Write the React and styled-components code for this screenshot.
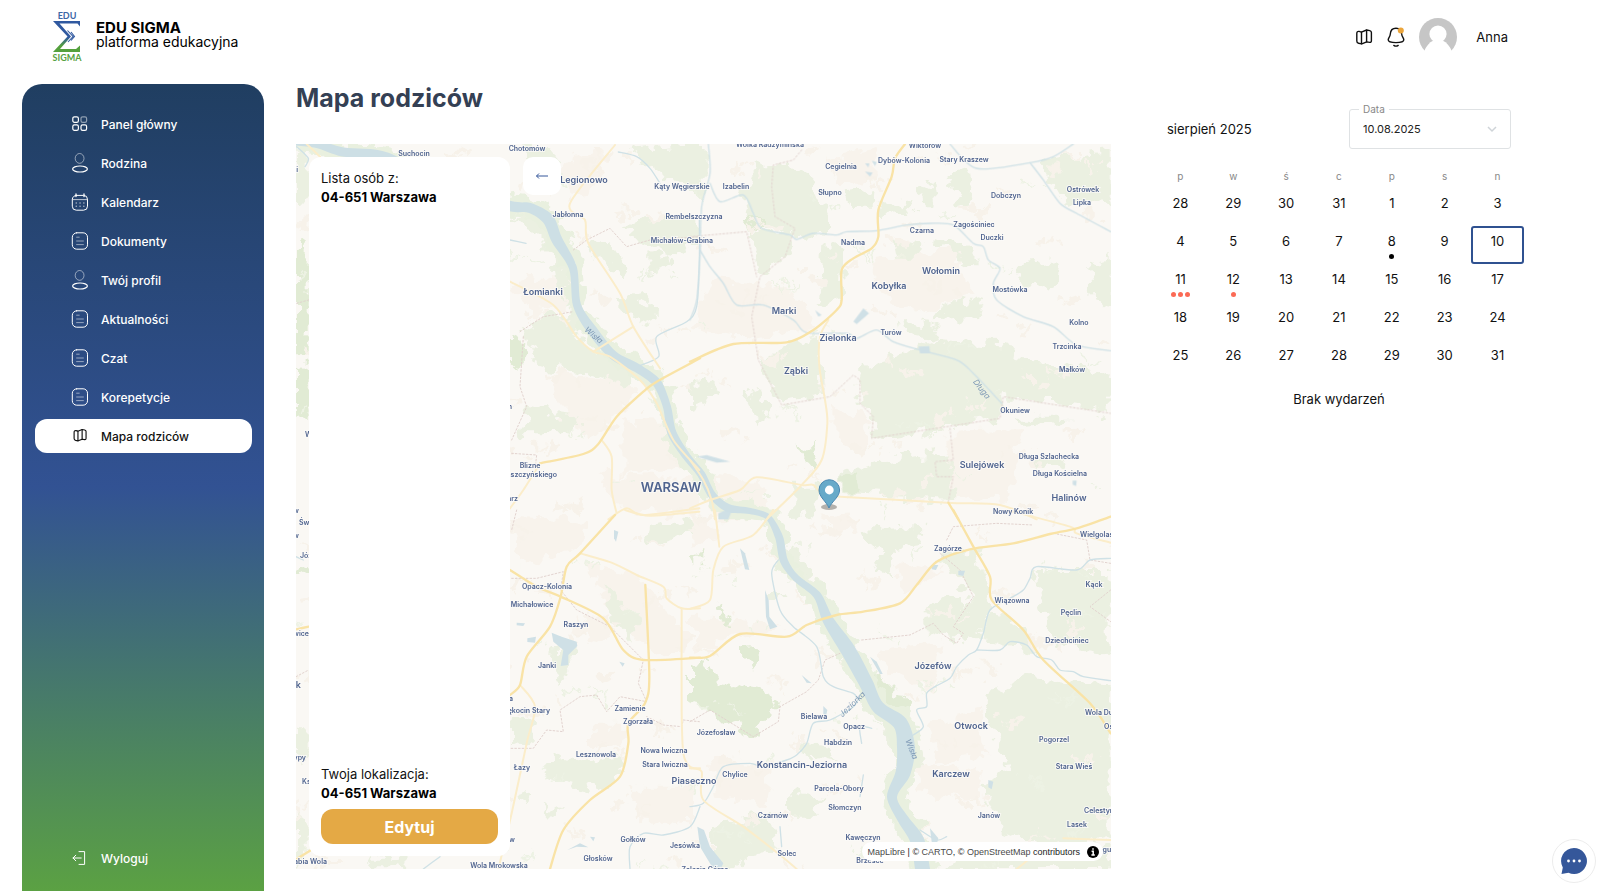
import React from "react";
import styled, { createGlobalStyle } from "styled-components";

const GlobalStyle = createGlobalStyle`
  *, *::before, *::after { box-sizing: border-box; }
  body { margin: 0; background: #fff; color: #111; font-family: Inter, "Open Sans", sans-serif; font-size: 13px; }
  button, select { font: inherit; color: inherit; }
`;

/* ---------- page frame ---------- */

const Page = styled.div`
  min-height: 100vh;
  display: flex;
  flex-direction: column;
`;

const Header = styled.header`
  height: 84px;
  padding: 0 92px 10px 52px;
  display: flex;
  align-items: center;
  justify-content: space-between;
`;

const Brand = styled.a`
  display: flex;
  align-items: center;
  gap: 14px;
  color: #000;
  text-decoration: none;
`;

const BrandText = styled.span`
  display: flex;
  flex-direction: column;
  padding-bottom: 4px;
  font-size: 14px;
  line-height: 14px;
`;

const BrandName = styled.strong`
  font-size: 15px;
  font-weight: 700;
`;

const UserBar = styled.div`
  display: flex;
  align-items: center;
  gap: 13px;
`;

const IconButton = styled.button`
  display: flex;
  padding: 0;
  border: 0;
  background: none;
  color: #111;
  cursor: pointer;
`;

const UserName = styled.span`
  margin-left: 6px;
  font-size: 13px;
`;

const Body = styled.div`
  flex: 1;
  display: grid;
  grid-template-columns: 242px minmax(0, 1fr) 370px;
  padding: 0 76px 0 22px;
`;

/* ---------- sidebar ---------- */

const Sidebar = styled.nav`
  display: flex;
  flex-direction: column;
  justify-content: space-between;
  padding: 23px 12px 16px 13px;
  border-radius: 20px 20px 0 0;
  background: linear-gradient(180deg, #203e61 0%, #325293 50%, #5ba143 100%);
`;

const NavList = styled.ul`
  list-style: none;
  margin: 0;
  padding: 0;
  display: flex;
  flex-direction: column;
  gap: 5px;
`;

const NavLink = styled.a`
  height: 34px;
  padding-left: 36px;
  display: flex;
  align-items: center;
  gap: 12px;
  border-radius: 12px;
  background: ${(p) => (p.$active ? "#fff" : "transparent")};
  color: ${(p) => (p.$active ? "#111" : "#fff")};
  font-size: 12px;
  font-weight: 500;
  text-decoration: none;
`;

/* ---------- map area ---------- */

const Main = styled.main`
  display: flex;
  flex-direction: column;
  padding: 0 43px 22px 32px;
`;

const PageTitle = styled.h1`
  margin: 0;
  height: 60px;
  font-size: 25px;
  line-height: 28px;
  font-weight: 700;
  color: #344054;
`;

const MapFrame = styled.section`
  position: relative;
  flex: 1;
  min-height: 480px;
  display: flex;
  gap: 13px;
  padding: 13px;
  background: #faf8f4;
  overflow: hidden;
`;

const MapCanvas = styled.svg`
  position: absolute;
  inset: 0;
  width: 100%;
  height: 100%;
`;

const PlacePanel = styled.aside`
  position: relative;
  width: 201px;
  padding: 12px;
  display: flex;
  flex-direction: column;
  justify-content: space-between;
  border-radius: 12px;
  background: #fff;
`;

const PlaceText = styled.p`
  margin: 0;
  font-size: 13px;
  line-height: 19px;
  color: #111;
`;

const PlaceCode = styled.strong`
  display: block;
  font-weight: 700;
  color: #000;
`;

const EditButton = styled.button`
  width: 100%;
  height: 35px;
  margin-top: 6px;
  border: 0;
  border-radius: 12px;
  background: #e4a945;
  color: #fff;
  font-size: 16px;
  font-weight: 700;
  cursor: pointer;
`;

const BackButton = styled.button`
  position: relative;
  width: 38px;
  height: 38px;
  padding: 0;
  display: flex;
  align-items: center;
  justify-content: center;
  border: 0;
  border-radius: 10px;
  background: #fff;
  color: #35579a;
  cursor: pointer;
`;

const Attribution = styled.div`
  position: absolute;
  right: 8px;
  bottom: 8px;
  height: 19px;
  padding: 0 4px 0 6px;
  display: flex;
  align-items: center;
  gap: 7px;
  border-radius: 12px;
  background: #fff;
  font-family: "Liberation Sans", sans-serif;
  font-size: 9px;
  color: #222;

  a { color: #4a4a4a; text-decoration: none; }
`;

/* ---------- calendar ---------- */

const CalendarPanel = styled.aside`
  padding-top: 25px;
`;

const CalendarHead = styled.div`
  display: flex;
  align-items: center;
  justify-content: space-between;
  padding: 0 13px;
`;

const MonthName = styled.h2`
  margin: 0;
  font-size: 13px;
  font-weight: 400;
`;

const DateField = styled.div`
  position: relative;
  width: 162px;

  svg { position: absolute; right: 14px; top: 15px; pointer-events: none; }
`;

const DateLabel = styled.label`
  position: absolute;
  top: -6px;
  left: 10px;
  padding: 0 4px;
  background: #fff;
  font-size: 10px;
  line-height: 12px;
  color: #888;
`;

const DateSelect = styled.select`
  appearance: none;
  width: 100%;
  height: 40px;
  padding: 0 13px;
  border: 1px solid #dfe2e4;
  border-radius: 3px;
  background: #fff;
  font-size: 11px;
  color: #222;
`;

const MonthTable = styled.table`
  width: 100%;
  margin-top: 14px;
  table-layout: fixed;
  border-collapse: collapse;

  th { height: 25px; padding: 0; font-size: 10px; font-weight: 400; color: #888; }
  td { height: 38px; padding: 0; }
`;

const Day = styled.button`
  width: 100%;
  height: 38px;
  padding: 5px 0 0;
  display: flex;
  flex-direction: column;
  align-items: center;
  gap: 5px;
  border: 2px solid ${(p) => (p.$selected ? "#2f5190" : "transparent")};
  border-radius: 3px;
  background: none;
  font-size: 13px;
  line-height: 16px;
  cursor: pointer;
`;

const Dots = styled.span`
  display: flex;
  gap: 2px;
`;

const Dot = styled.span`
  width: 5px;
  height: 5px;
  border-radius: 50%;
  background: ${(p) => p.$color};
`;

const NoEvents = styled.p`
  margin: 13px 0 0;
  font-size: 13px;
  line-height: 16px;
  text-align: center;
`;

const ChatButton = styled.button`
  position: fixed;
  right: 4px;
  bottom: 8px;
  width: 44px;
  height: 44px;
  padding: 0;
  display: flex;
  align-items: center;
  justify-content: center;
  border: 1px solid #ececec;
  border-radius: 50%;
  background: #fff;
  cursor: pointer;
`;

/* ---------- icons ---------- */

const Icon = ({ size = 18, children, box = "0 0 18 18" }) => (
  <svg width={size} height={size} viewBox={box} fill="none" stroke="currentColor" strokeLinecap="round" strokeLinejoin="round" aria-hidden="true">
    {children}
  </svg>
);

const GridIcon = () => (
  <Icon>
    <rect x="1.8" y="1.8" width="5.6" height="5.6" rx="1.6" strokeWidth="1.2" />
    <rect x="10" y="1.8" width="5.6" height="5.6" rx="1.6" strokeWidth="1.2" opacity=".5" />
    <rect x="1.8" y="9.8" width="5.6" height="5.6" rx="1.6" strokeWidth="1.2" />
    <rect x="10" y="9.8" width="5.6" height="5.6" rx="1.6" strokeWidth="1.2" />
  </Icon>
);

const PersonIcon = () => (
  <svg width="18" height="20" viewBox="0 0 18 20" fill="none" stroke="currentColor" aria-hidden="true">
    <ellipse cx="8.6" cy="5.4" rx="4.4" ry="4.9" opacity=".5" />
    <ellipse cx="9" cy="16" rx="7.4" ry="3" strokeWidth="1.2" />
  </svg>
);

const CalendarIcon = () => (
  <Icon>
    <rect x="1.3" y="2.4" width="15.2" height="14.8" rx="4" />
    <path d="M5 1v2.6M13 1v2.6" strokeWidth="1.3" />
    <path d="M1.5 6.6h15" opacity=".7" />
    <path d="M5.2 10h.1M9 10h.1M12.8 10h.1M5.2 13.2h.1M9 13.2h.1M12.8 13.2h.1" strokeWidth="1.5" opacity=".6" />
  </Icon>
);

const DocumentIcon = () => (
  <Icon>
    <rect x="1.3" y=".8" width="15.2" height="16.4" rx="4.4" />
    <path d="M5.6 5.2h2.6M5.6 9h6.8M5.6 12.6h6.8" opacity=".5" />
  </Icon>
);

const FoldedMapIcon = ({ box }) => (
  <Icon box={box}>
    <path d="M1.8 5.6q0-2.6 2.3-2.2l2.3.7L11.6 2l3.2.6q1.6.4 1.6 2v8.2q0 1.8-1.7 1.6l-3-.5-4.9 2-3.200-.6q-1.800-.4-1.800-2.200z" strokeWidth="1.4" />
    <path d="M6.500 4.200v11.500M11.600 2.200v11.600" strokeWidth="1.4" />
  </Icon>
);

const SmallMapIcon = () => <FoldedMapIcon box="-2 -1 22 22" />;

const BellIcon = () => (
  <svg width="20" height="22" viewBox="0 0 20 22" fill="none" stroke="#111" strokeWidth="1.4" strokeLinecap="round" aria-hidden="true">
    <path d="M10 2.200C6.600 2.200 4.500 4.500 4.300 8 4.200 10.800 2.300 11.800 2.200 13.800 2.200 16 5.500 16.600 10 16.600s7.800-.6 7.800-2.800c0-2-2-3-2.100-5.800-.2-3.500-2.300-5.800-5.700-5.800z" />
    <path d="M7.800 19.400q2.200 1.500 4.400 0" />
    <circle cx="14.800" cy="4.600" r="3" fill="#eba53c" stroke="none" />
  </svg>
);

const LogoutIcon = () => (
  <Icon>
    <path d="M8 2.600h5.600v12.800H8" />
    <path d="M10.200 9H2M4.800 6.200L2 9l2.800 2.800" />
  </Icon>
);

const Avatar = () => (
  <svg width="38" height="38" viewBox="0 0 38 38" role="img" aria-label="Anna">
    <circle cx="19" cy="19" r="19" fill="#c6c6c6" />
    <circle cx="19" cy="16" r="8.600" fill="#fff" />
    <path d="M5 33.500C7 28.500 10 24.500 14.500 22.500h9C28 24.500 31 28.500 33 33.500V38H5z" fill="#fff" />
  </svg>
);

const Logo = () => (
  <svg width="30" height="52" viewBox="0 0 30 52" aria-hidden="true">
    <defs>
      <linearGradient id="sigma" x1="0" y1="10" x2="0" y2="43" gradientUnits="userSpaceOnUse">
        <stop offset=".5" stopColor="#3059a0" />
        <stop offset=".75" stopColor="#54a03d" />
      </linearGradient>
    </defs>
    <text x="15" y="8" textAnchor="middle" fontFamily="Lato, sans-serif" fontWeight="700" fontSize="9" fill="#3c66a5">EDU</text>
    <path d="M1 10h27v5.500l-2.500-3H7.500L19 25.500 8 38h16l4-3.500V41H1l14.500-15.500z" fill="url(#sigma)" />
    <path d="M15.500 19.500l5.500 6-5 5.500M19 21l3.500 4.500-3.500 4" fill="none" stroke="#3059a0" strokeWidth="1.100" />
    <text x="15" y="50" textAnchor="middle" fontFamily="Lato, sans-serif" fontWeight="700" fontSize="9" fill="#57a242">SIGMA</text>
  </svg>
);

/* ---------- map drawing ---------- */

const toPairs = (text) => text.split(" ").map((pair) => pair.split(",").map(Number));

// Catmull-Rom spline through the points, written as cubic Béziers.
const curve = (pts) => {
  let d = `M${pts[0].slice(0, 2)}`;
  for (let i = 0; i < pts.length - 1; i += 1) {
    const a = pts[i - 1] || pts[i];
    const b = pts[i];
    const c = pts[i + 1];
    const e = pts[i + 2] || c;
    d += `C${b[0] + (c[0] - a[0]) / 7},${b[1] + (c[1] - a[1]) / 7} ${c[0] - (e[0] - b[0]) / 7},${c[1] - (e[1] - b[1]) / 7} ${c[0]},${c[1]}`;
  }
  return d;
};

// A closed band round a centre line whose points are x, y, width.
const band = (pts, extra = 0) => {
  const side = (sign) =>
    pts.map(([x, y, w], i) => {
      const p = pts[i - 1] || pts[i];
      const n = pts[i + 1] || pts[i];
      const dx = n[0] - p[0];
      const dy = n[1] - p[1];
      const len = Math.hypot(dx, dy);
      const h = (sign * (w + extra)) / 2;
      return [x - (dy / len) * h, y + (dx / len) * h];
    });
  return `${curve(side(1))}L${curve(side(-1).reverse()).slice(1)}Z`;
};

const VISTULA = toPairs(
  "290,142,6 317,144,8 343,152,9 387,157,9 450,190,9 510,206,10 530,208,10 548,219,12 557,240,11 573,268,8 577,305,8 592,330,10 613,355,9 637,368,9 657,383,9 667,407,8 672,433,9 687,457,8 701,474,8 712,495,8 728,508,8 750,511,6 768,517,6 779,537,8 784,561,8 796,578,7 817,595,8 828,620,11 848,650,15 866,683,14 878,707,13 900,723,15 906,747,18 903,773,15 892,797,10 903,819,11 917,840,14 923,872,15"
);

const TILES = [
  {
    x: 290, y: 140,
    forest: ["690,12 780,12 800,60 740,110", "1010,30 1228,12 1228,130 1130,110 1060,60", "1000,250 1228,230 1228,300 1150,340 1060,320", "900,310 950,300 1010,400 990,430 930,350", "700,580 760,530 850,520 870,600 940,650 1040,700 1020,740 900,700 740,680 715,620", "715,810 880,830 850,880 690,880", "18,40 56,20 56,180 18,190", "980,480 1040,460 1110,530 1050,560", "1080,350 1130,340 1150,380 1090,400", "660,240 720,220 800,320 830,400 820,480 800,440 790,340 720,270"],
    dark: ["660,580 700,600 695,660 660,690", "18,315 56,310 56,640 18,640", "18,680 56,680 56,830 18,830"],
    urban: ["700,400 850,420 840,500 740,520 670,440", "780,700 1000,720 1040,760 900,900 800,800", "1000,840 1120,850 1200,980 1000,1000", "820,60 960,30 900,170 830,180", "920,1000 1228,1020 1228,1130 980,1100"],
    major: ["750,970 880,942 925,912 980,830 1060,755 1100,725 1230,655"],
    minor: ["975,15 840,190 885,240 895,310 990,460 1030,560 1110,685", "660,425 790,495 860,590 910,635 960,650 1050,720 1100,790 1150,900 1228,990", "910,635 1030,560", "750,970 700,1050 660,1105", "935,900 965,950 965,1050 980,1120", "955,1138 1010,1105 1060,1125 1228,1105", "50,12 90,50"],
    streams: ["985,36 1040,50 1080,85 1110,130", "660,300 708,310", "1228,240 1228,360 1220,500 1190,545 1100,590 1106,650 1040,680", "20,20 55,55 45,80"],
    edges: ["890,300 960,265 1010,320 1080,300 1228,290", "690,575 760,530 850,515", "700,590 690,740 710,800 665,900", "665,940 740,945 735,990", "850,330 890,300", "20,490 56,480"],
    lakes: [],
  },
  {
    x: 690, y: 140,
    forest: ["245,70 320,75 380,150 420,240 420,275 320,290 250,260 180,240 160,165 190,80", "560,200 660,180 670,220 570,225", "990,370 1120,355 1110,430 1020,450 985,420", "1200,380 1262,360 1262,500 1210,480", "510,680 640,640 740,600 940,610 980,660 1180,680 1262,720 1262,825 1160,800 940,770 930,830 780,860 545,895 550,830 500,780 505,710", "400,310 460,330 455,480 380,500 395,420", "280,620 390,590 395,760 270,790 210,660", "450,1000 560,960 780,940 790,1080 460,1065", "1060,60 1262,40 1262,180 1130,200 1080,110", "180,280 320,270 290,350 210,410", "820,470 880,490 870,540 740,550 760,500", "0,12 50,12 50,180 0,160", "770,100 830,80 850,180 810,190", "600,300 700,310 690,350 610,350", "160,760 200,740 240,840 210,860", "690,150 730,130 740,190 700,190", "1040,950 1140,960 1120,990 1050,980", "310,1040 390,1040 370,1130 310,1120", "470,160 560,150 555,200 490,200", "630,540 750,560 740,600 640,590", "980,830 1140,830 1120,850 1000,860", "740,290 830,320 880,370 840,370 760,330", "0,740 80,730 60,780 0,800"],
    dark: ["310,920 350,930 390,890 365,985", "160,240 215,240 240,270 190,275", "460,1010 500,1000 510,1060 465,1060"],
    urban: ["60,420 300,440 380,560 200,600 0,560", "540,360 800,330 840,460 700,520 600,480", "290,640 380,620 400,760 290,780", "430,800 540,830 520,930 430,900", "760,880 1000,870 960,1080 790,1070", "0,1000 200,1020 260,1138 80,1138", "400,60 560,30 560,120 440,130"],
    major: ["0,665 130,612 290,607 370,570 440,510 455,480 455,390 490,355 545,325 565,290 565,210 605,110 615,55 645,12", "775,1088 805,1138"],
    minor: ["415,540 390,590 388,680 405,780 412,850 395,960 335,1035 230,1138", "0,1105 60,1080 150,1050 200,1012 335,1035 370,1035 400,1065 450,1070 770,1088 930,1095 1040,1138", "0,960 40,1020 65,1080 75,1138"],
    streams: ["55,12 60,100 35,200 30,350 20,480 0,540", "60,130 90,185 160,165 190,220 215,265 300,285 320,298 370,280 440,285 470,275 560,272 650,255 720,250 790,255 850,310 880,320 895,360 930,385 910,430 920,480 1000,530 1090,560 1160,615 1262,632", "780,12 860,85 1020,68 1090,50 1150,12", "1020,68 1060,120 1110,190 1160,220 1262,275", "30,330 60,380 100,430 140,495 220,495 310,540 350,578 470,580 500,595 560,570 610,605 690,630 800,660 850,700 935,790"],
    edges: ["335,30 310,60 250,75 245,140 255,230 315,265 285,350 210,410 185,530 205,660 275,795 420,770 490,705 510,720 510,790 550,830 545,895 930,835 940,770 1100,795 1262,820", "780,865 790,960 735,965 740,1010 790,1010 775,1085", "0,290 170,275 200,410"],
    lakes: ["520,505 537,520 500,552 490,545", "685,620 718,618 720,640 690,640", "375,510 395,525 385,530", "525,95 548,98 540,110", "525,70 538,70 535,82", "545,62 560,66 555,78", "85,1120 130,1100 115,1138 85,1138", "1148,1022 1160,1022 1158,1038 1148,1034", "20,950 50,945 120,965 80,968"],
  },
  {
    x: 290, y: 510,
    forest: ["790,730 870,760 1000,740 990,800 930,840 830,820 760,780", "660,630 740,640 730,700 660,715", "940,230 1050,320 1020,400 960,310", "18,900 56,930 56,1030 18,1075", "1080,50 1228,20 1228,60 1070,110", "750,880 820,900 780,915", "240,1040 340,1040 330,1075 250,1075", "18,640 56,680 56,760 18,720", "800,400 850,420 810,530 795,500", "690,840 740,860 700,880"],
    dark: ["1200,470 1228,460 1228,590 1200,570", "20,170 56,165 56,205 20,185", "1200,145 1228,135 1228,170"],
    urban: ["660,20 900,30 860,120 700,160", "880,160 1060,200 1200,400 1090,430 950,280", "850,300 960,350 940,390 860,370", "1010,830 1200,830 1200,950 1050,930", "900,650 1010,650 1000,720 900,700", "1100,330 1170,330 1170,420 1100,420"],
    major: ["975,15 870,130 830,170 812,260 780,350 710,440 690,525 660,555", "660,180 740,230 812,260 940,325 1000,420 1060,450 1230,443", "1066,225 1078,500 1065,580 1015,640 1015,700 990,800 900,870 820,960 780,1077", "18,358 56,350", "18,1048 60,1022"],
    minor: ["1005,0 1080,17 1228,5", "870,130 970,160 1040,195 1120,230 1130,265 1175,295 1230,295", "1175,295 1175,600 1180,730 1200,770 1230,775", "690,525 735,590 710,700 665,910 625,1077"],
    streams: ["1230,890 1200,950 1120,975 1060,970 1020,1010 1020,1077", "400,1077 450,1040", "18,140 40,150"],
    edges: ["665,205 740,205 820,185 812,240 860,300 960,350 1060,450 1045,520 1070,575 990,560 950,605 920,555 870,560 810,600 820,665 770,660 730,715 660,715", "1070,620 1120,645 1175,650 1180,630 1228,635", "680,0 665,60", "18,500 56,480"],
    lakes: ["785,368 815,380 860,395 862,408 835,435 835,465 812,468 820,420 790,395", "712,385 738,380 735,398 712,396", "680,338 705,340 700,348 680,346", "972,60 985,65 978,95 972,85", "832,1020 870,1000 895,1012 860,1010", "988,455 1004,460 998,470", "900,980 915,982 910,994"],
  },
  {
    x: 690, y: 510,
    forest: ["740,130 870,130 900,230 890,330 860,400 820,370 850,260 790,200", "900,560 1000,500 1262,520 1262,980 1100,1020 950,960 870,840 960,760 930,700 880,640", "870,390 900,300 1000,360 1040,430 930,400", "1030,180 1262,180 1262,430 1100,400 1060,300", "300,840 400,860 380,920 300,920", "60,950 240,900 260,1000 130,1075 60,1050", "510,60 700,50 690,110 560,130", "700,330 760,250 840,270 830,400 700,360", "240,240 275,240 270,275 235,270", "330,700 420,710 440,750 360,740", "590,60 620,200 560,180", "780,1040 1262,1010 1262,1077 760,1077", "280,80 370,190 420,290 350,230 290,150", "660,690 710,720 650,850 640,800", "570,620 620,680 630,760 600,700"],
    dark: ["0,455 30,450 100,520 230,540 265,600 220,620 190,680 60,600 0,580", "150,430 180,395 215,440 175,468", "540,480 590,510 660,590 630,610 570,560", "80,280 100,290 120,350 110,350"],
    urban: ["0,30 60,20 80,90 10,110", "0,320 200,330 280,360 120,380 20,420", "560,420 760,400 720,540 620,500", "720,640 870,600 880,740 740,760", "680,760 880,780 860,870 700,850", "60,740 250,760 220,880 80,860", "620,150 760,180 640,260", "400,20 480,10 500,60 430,70"],
    major: ["790,0 850,110 900,200 905,270 1000,360 1060,450 1200,580 1262,670", "0,443 60,438 150,372 290,380 350,345 440,315 520,305 630,280 680,225 740,155 840,118 970,100 1080,72 1160,55 1262,20"],
    minor: ["75,0 88,110", "250,0 190,75 100,110 70,180 60,270 0,297", "950,0 1140,50 1160,70 1262,98", "0,775 35,785 40,870 160,950 270,1035 320,1077", "1120,985 1262,990", "980,1077 1020,1045"],
    streams: ["1262,145 1200,150 1160,180 1040,170 1020,205 1000,240 960,265 900,300 880,370 860,420 835,435 800,470 780,505 735,530 710,550 710,590 680,600 700,650 670,675", "860,420 930,420 960,395 1010,405 1040,440 1085,450 1110,480 1150,485 1180,500 1262,512", "510,555 490,590 420,630 370,640 350,700 320,735 290,750 220,770 180,760 100,770 70,830 40,880 0,890", "265,150 245,190 270,300 310,350 380,410 400,500 430,530 490,550 500,565", "545,655 510,650 515,700", "520,795 510,860", "270,950 275,1010", "690,960 740,990 770,980"],
    edges: ["515,390 660,375 730,340 760,375 800,400 820,370 790,350 850,260 810,180 750,130", "0,635 60,600 190,680 265,635 270,590 350,545 385,510 405,450 450,430", "1262,240 1200,290 1262,335", "770,90 790,50 920,40 1030,45", "1262,160 1200,150 1190,90 1090,70", "620,870 625,920 660,950"],
    lakes: ["150,115 165,130 178,180 165,178", "225,240 236,270 238,320 262,350 240,358 228,320", "22,950 42,960 60,1010 100,1060 92,1077 70,1077 30,1010", "540,440 560,455 578,492 570,492", "725,165 745,165 738,180 725,178", "805,182 825,182 820,198 805,195", "895,810 910,815 905,838 895,832", "335,495 365,520 350,518", "400,588 412,600 408,618 400,612", "720,955 745,985 740,1005 725,995"],
  },
];

// name, x, y, and an anchor where the name is not centred on its point
const VILLAGES = [
  ["Suchocin", 414, 153], ["Chotomów", 527, 148], ["Jabłonna", 568, 214], ["Kąty Węgierskie", 682, 186], ["Rembelszczyzna", 694, 216], ["Michałów-Grabina", 682, 240],
  ["Blizne", 530, 465], ["Łaszczyńskiego", 557, 474, "end"], ["Leoncini", 298, 169, "end"], ["Wyględy", 305, 434, "start"], ["Święcice", 299, 522, "start"], ["Józefów", 300, 555, "start"],
  ["Błonów", 299, 510, "end"], ["Biskupów", 299, 535, "end"], ["Kotowice", 309, 633, "end"], ["Krypy", 306, 757, "end"], ["Klaudyn", 512, 406, "end"], ["Ołtarz", 518, 498, "end"], ["Wolica", 513, 698, "end"], ["Suchostrów", 515, 839, "end"],
  ["Książenice", 302, 781, "start"], ["Żabia Wola", 327, 861, "end"], ["Opacz-Kolonia", 547, 586], ["Michałowice", 532, 604], ["Raszyn", 576, 624], ["Janki", 547, 665], ["Sękocin Stary", 550, 710, "end"],
  ["Zamienie", 630, 708], ["Zgorzała", 638, 721], ["Lesznowola", 596, 754], ["Łazy", 522, 767], ["Nowa Iwiczna", 664, 750], ["Stara Iwiczna", 665, 764], ["Gołków", 633, 839],
  ["Głosków", 598, 858], ["Jesówka", 685, 845], ["Wola Mrokowska", 499, 865], ["Zalesie Górne", 705, 869], ["Wólka Radzymińska", 770, 144], ["Wiktorów", 925, 145],
  ["Dybów-Kolonia", 904, 160], ["Stary Kraszew", 964, 159], ["Cegielnia", 841, 166], ["Izabelin", 736, 186], ["Słupno", 830, 192], ["Dobczyn", 1006, 195], ["Ostrówek", 1083, 189],
  ["Lipka", 1082, 202], ["Zagościniec", 974, 224], ["Czarna", 922, 230], ["Duczki", 992, 237], ["Nadma", 853, 242], ["Mostówka", 1010, 289], ["Kolno", 1079, 322],
  ["Turów", 891, 332], ["Trzcinka", 1067, 346], ["Małków", 1072, 369], ["Okuniew", 1015, 410], ["Długa Szlachecka", 1049, 456], ["Długa Kościelna", 1060, 473],
  ["Nowy Konik", 1013, 511], ["Wielgolas", 1080, 534, "start"], ["Zagórze", 948, 548], ["Kąck", 1094, 584], ["Wiązowna", 1012, 600], ["Pęclin", 1071, 612], ["Dziechciniec", 1067, 640],
  ["Bielawa", 814, 716], ["Opacz", 854, 726], ["Habdzin", 838, 742], ["Józefosław", 716, 732], ["Pogorzel", 1054, 739], ["Wola Ducka", 1085, 712, "start"], ["Osieck", 1104, 726, "start"],
  ["Chylice", 735, 774], ["Stara Wieś", 1074, 766], ["Parcela-Obory", 839, 788], ["Słomczyn", 845, 807], ["Czarnów", 773, 815], ["Kawęczyn", 863, 837], ["Solec", 787, 853],
  ["Janów", 989, 815], ["Celestynów", 1084, 810, "start"], ["Lasek", 1077, 824], ["Brzesce", 870, 860], ["Regut", 1094, 849, "start"],
];

const TOWNS = [
  ["Legionowo", 584, 179], ["Łomianki", 543, 291], ["Wołomin", 941, 270], ["Kobyłka", 889, 285], ["Marki", 784, 310], ["Zielonka", 838, 337], ["Ząbki", 796, 370],
  ["Sulejówek", 982, 464], ["Halinów", 1069, 497], ["Józefów", 933, 665], ["Otwock", 971, 725], ["Konstancin-Jeziorna", 802, 764], ["Karczew", 951, 773], ["Piaseczno", 694, 780],
  ["Grodzisk", 301, 684, "end"],
];

const WATERS = [
  ["Wisła", 594, 335, 40], ["Długa", 982, 389, 52], ["Jeziorka", 852, 704, -44], ["Wisła", 912, 749, 68],
];

const MapText = styled.text`
  font-family: Inter, "Open Sans", sans-serif;
  font-size: ${(p) => p.$size}px;
  font-weight: ${(p) => (p.$water ? 400 : 600)};
  font-style: ${(p) => (p.$water ? "italic" : "normal")};
  fill: ${(p) => (p.$water ? "#7d98b5" : "#50648f")};
  stroke: #fbfaf7;
  stroke-width: ${(p) => (p.$water ? 0 : 2)}px;
  stroke-opacity: 0.8;
  paint-order: stroke;
  text-anchor: ${(p) => p.$anchor || "middle"};
  dominant-baseline: central;
`;

const speckles = Array.from({ length: 700 }, (_, i) => {
  const x = 296 + ((i * 197.3) % 815);
  const y = 144 + ((i * 89.7 + (i % 7) * 31) % 725);
  const r = 2 + (i % 5);
  return { x, y, r, h: 1 + (i % 3), turn: (i * 37) % 180 };
});

const Tile = ({ tile, children }) => <g transform={`translate(${tile.x} ${tile.y}) scale(0.33333)`}>{children}</g>;

const WarsawMap = () => (
  <MapCanvas viewBox="296 144 815 725" preserveAspectRatio="xMidYMid slice" role="img" aria-label="Mapa okolic Warszawy">
    <defs>
      <filter id="rough" x="-5%" y="-5%" width="110%" height="110%">
        <feTurbulence type="fractalNoise" baseFrequency="0.07" numOctaves="3" seed="4" />
        <feDisplacementMap in="SourceGraphic" scale="24" xChannelSelector="R" yChannelSelector="G" />
      </filter>
    </defs>
    <rect x="296" y="144" width="815" height="725" fill="#faf8f4" />
    <g filter="url(#rough)">
      {TILES.map((tile) => (
        <Tile key={`${tile.x}-${tile.y}`} tile={tile}>
          {tile.urban.map((p) => <polygon key={p} points={p} fill="#f8f3ec" />)}
          {tile.forest.map((p) => <polygon key={p} points={p} fill="#ebf0e1" />)}
          {tile.dark.map((p) => <polygon key={p} points={p} fill="#e1ebd4" />)}
        </Tile>
      ))}
      {speckles.map((s, i) => (
        <rect key={i} x={s.x} y={s.y} width={s.r * 2} height={s.h * 2} fill={i % 3 ? "#f7f2ea" : "#edf2e4"} transform={`rotate(${s.turn} ${s.x} ${s.y})`} />
      ))}
      <path d={band(VISTULA, 10)} fill="#e9f0df" />
    </g>
    {TILES.map((tile) => (
      <Tile key={`${tile.x}-${tile.y}`} tile={tile}>
        <g fill="none" strokeLinecap="round" strokeLinejoin="round">
          {tile.edges.map((p) => <polyline key={p} points={p} stroke="#e2d3cf" strokeWidth="3" strokeDasharray="5 6" />)}
          {tile.streams.map((p) => <path key={p} d={curve(toPairs(p))} stroke="#cfe1e6" strokeWidth="4" />)}
        </g>
        {tile.lakes.map((p) => <polygon key={p} points={p} fill="#cfe0e6" />)}
      </Tile>
    ))}
    <path d={band(VISTULA)} fill="#cddfe5" />
    {TILES.map((tile) => (
      <Tile key={`${tile.x}-${tile.y}`} tile={tile}>
        <g fill="none" strokeLinecap="round" strokeLinejoin="round">
          {tile.minor.map((p) => <path key={p} d={curve(toPairs(p))} stroke="#fbedca" strokeWidth="6" />)}
          {tile.major.map((p) => <path key={p} d={curve(toPairs(p))} stroke="#f9e3a6" strokeWidth="7" />)}
        </g>
      </Tile>
    ))}
    {WATERS.map(([name, x, y, turn]) => (
      <MapText key={`${name}${x}`} x={x} y={y} $size={8} $water transform={`rotate(${turn} ${x} ${y})`}>{name}</MapText>
    ))}
    {VILLAGES.map(([name, x, y, anchor]) => <MapText key={`${name}${x}`} x={x} y={y} $size={7} $anchor={anchor}>{name}</MapText>)}
    {TOWNS.map(([name, x, y, anchor]) => <MapText key={name} x={x} y={y} $size={9} $anchor={anchor}>{name}</MapText>)}
    <MapText x="671" y="487" $size={13}>WARSAW</MapText>
    <g>
      <ellipse cx="829" cy="507" rx="8" ry="3" fill="#8f8b86" opacity=".65" />
      <path d="M829 508C826 501 819 497 819 490a10.300 10.300 0 0 1 20.600 0C839.600 497 832 501 829 508z" fill="#67aac9" stroke="#4a87b0" strokeWidth="1" />
      <circle cx="829.300" cy="490" r="4.400" fill="#fff" />
    </g>
  </MapCanvas>
);

/* ---------- page data ---------- */

const NAV = [
  ["Panel główny", GridIcon], ["Rodzina", PersonIcon], ["Kalendarz", CalendarIcon], ["Dokumenty", DocumentIcon], ["Twój profil", PersonIcon],
  ["Aktualności", DocumentIcon], ["Czat", DocumentIcon], ["Korepetycje", DocumentIcon], ["Mapa rodziców", SmallMapIcon],
];

const WEEKDAYS = ["p", "w", "ś", "c", "p", "s", "n"];

const RED = "#fb6a55";

const WEEKS = [
  [28, 29, 30, 31, 1, 2, 3],
  [4, 5, 6, 7, 8, 9, 10],
  [11, 12, 13, 14, 15, 16, 17],
  [18, 19, 20, 21, 22, 23, 24],
  [25, 26, 27, 28, 29, 30, 31],
];

const EVENTS = { 8: ["#000"], 11: [RED, RED, RED], 12: [RED] };

export default function App() {
  return (
    <>
      <GlobalStyle />
      <Page>
        <Header>
          <Brand href="#">
            <Logo />
            <BrandText>
              <BrandName>EDU SIGMA</BrandName>
              platforma edukacyjna
            </BrandText>
          </Brand>
          <UserBar>
            <IconButton aria-label="Mapa"><FoldedMapIcon /></IconButton>
            <IconButton aria-label="Powiadomienia"><BellIcon /></IconButton>
            <Avatar />
            <UserName>Anna</UserName>
          </UserBar>
        </Header>
        <Body>
          <Sidebar>
            <NavList>
              {NAV.map(([name, Glyph]) => {
                const active = name === "Mapa rodziców";
                return (
                  <li key={name}>
                    <NavLink href="#" $active={active} aria-current={active ? "page" : undefined}>
                      <Glyph />
                      {name}
                    </NavLink>
                  </li>
                );
              })}
            </NavList>
            <NavLink href="#"><LogoutIcon />Wyloguj</NavLink>
          </Sidebar>
          <Main>
            <PageTitle>Mapa rodziców</PageTitle>
            <MapFrame>
              <WarsawMap />
              <PlacePanel>
                <PlaceText>Lista osób z:<PlaceCode>04-651 Warszawa</PlaceCode></PlaceText>
                <div>
                  <PlaceText>Twoja lokalizacja:<PlaceCode>04-651 Warszawa</PlaceCode></PlaceText>
                  <EditButton>Edytuj</EditButton>
                </div>
              </PlacePanel>
              <BackButton aria-label="Wstecz">
                <svg width="14" height="8" viewBox="0 0 14 8" fill="none" stroke="currentColor" aria-hidden="true">
                  <path d="M13 4H1.500M4 1.500L1.500 4 4 6.500" />
                </svg>
              </BackButton>
              <Attribution>
                <span>
                  <a href="#">MapLibre</a> | © <a href="#">CARTO</a>, © <a href="#">OpenStreetMap</a> contributors
                </span>
                <svg width="12" height="12" viewBox="0 0 12 12" aria-hidden="true">
                  <circle cx="6" cy="6" r="6" fill="#000" />
                  <path d="M6 2.200v1.600M4.600 5.300H6.200V9M4.400 9h3.400" stroke="#fff" strokeWidth="1.500" fill="none" />
                </svg>
              </Attribution>
            </MapFrame>
          </Main>
          <CalendarPanel>
            <CalendarHead>
              <MonthName>sierpień 2025</MonthName>
              <DateField>
                <DateLabel htmlFor="date">Data</DateLabel>
                <DateSelect id="date" defaultValue="10.08.2025">
                  <option>10.08.2025</option>
                </DateSelect>
                <svg width="10" height="10" viewBox="0 0 10 10" fill="none" stroke="#cfd4d8" strokeWidth="1.500" aria-hidden="true">
                  <path d="M1 3l4 4 4-4" />
                </svg>
              </DateField>
            </CalendarHead>
            <MonthTable>
              <thead>
                <tr>{WEEKDAYS.map((d, i) => <th key={i} scope="col">{d}</th>)}</tr>
              </thead>
              <tbody>
                {WEEKS.map((week) => (
                  <tr key={week[0]}>
                    {week.map((day) => (
                      <td key={day}>
                        <Day $selected={day === 10}>
                          {day}
                          {EVENTS[day] && <Dots>{EVENTS[day].map((c, i) => <Dot key={i} $color={c} />)}</Dots>}
                        </Day>
                      </td>
                    ))}
                  </tr>
                ))}
              </tbody>
            </MonthTable>
            <NoEvents>Brak wydarzeń</NoEvents>
          </CalendarPanel>
        </Body>
      </Page>
      <ChatButton aria-label="Czat">
        <svg width="28" height="28" viewBox="0 0 28 28" aria-hidden="true">
          <path d="M14 1a13 13 0 1 1-5.500 24.800L1.500 27l1.300-6.500A13 13 0 0 1 14 1z" fill="#35579a" />
          <circle cx="8.500" cy="14" r="1.400" fill="#fff" />
          <circle cx="14" cy="14" r="1.400" fill="#fff" />
          <circle cx="19.500" cy="14" r="1.400" fill="#fff" />
        </svg>
      </ChatButton>
    </>
  );
}
